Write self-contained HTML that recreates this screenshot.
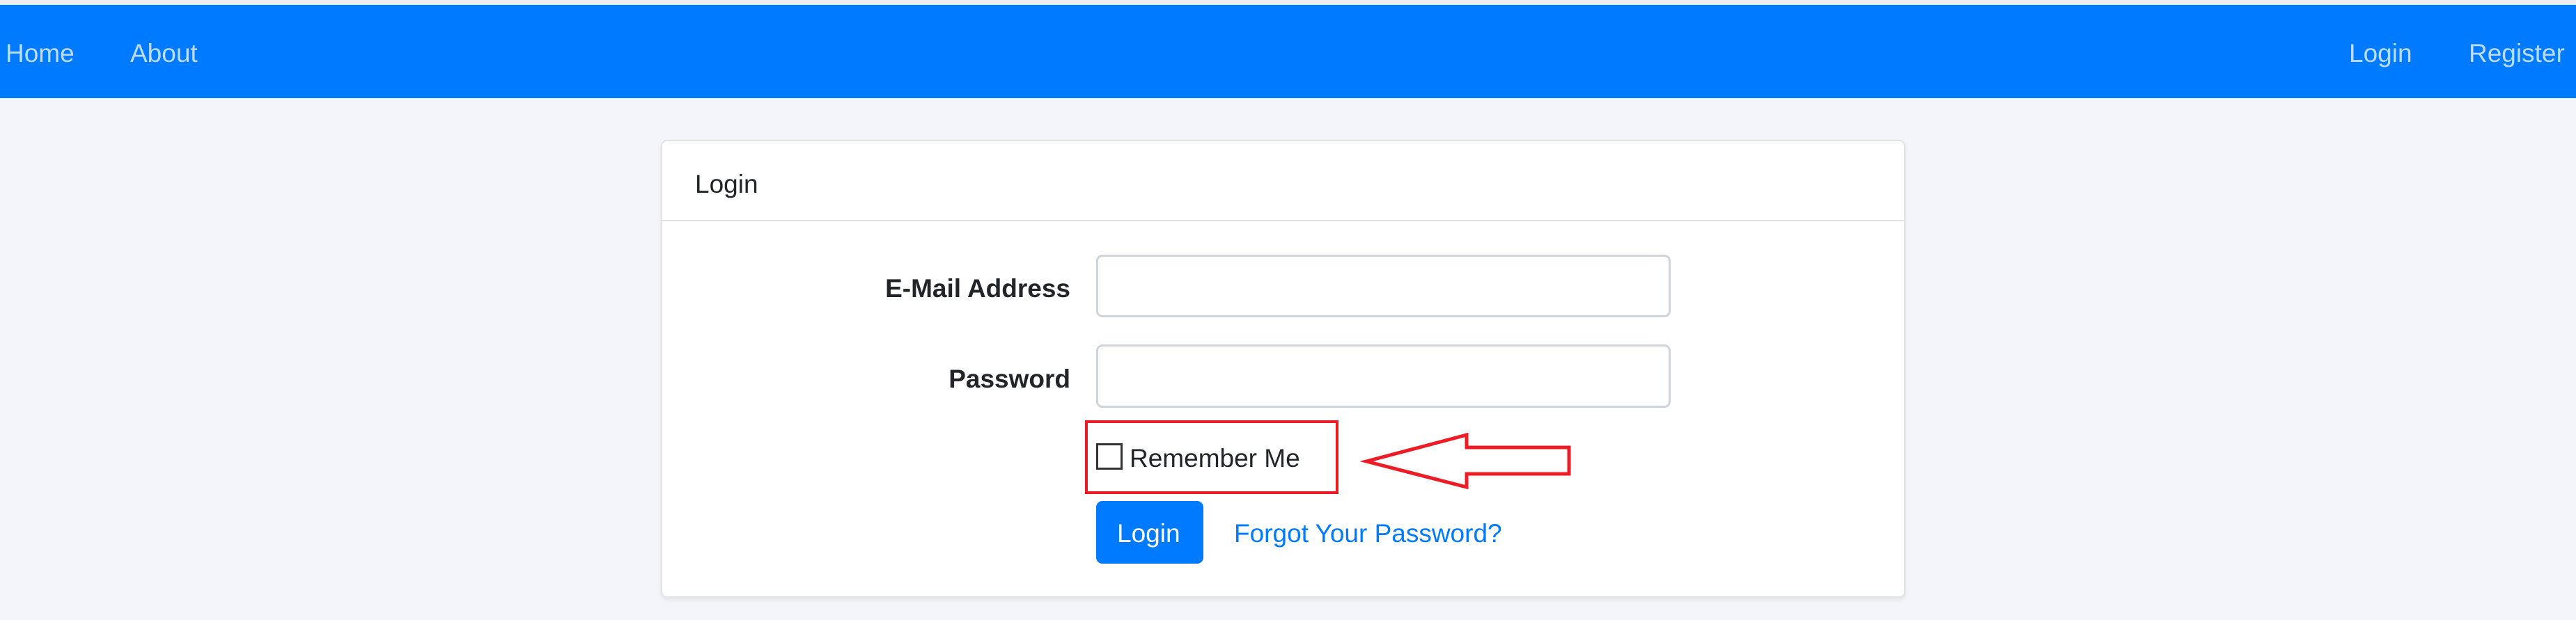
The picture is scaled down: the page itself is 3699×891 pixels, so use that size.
<!DOCTYPE html>
<html><head><meta charset="utf-8"><style>
*{margin:0;padding:0;box-sizing:border-box}
body{width:3699px;height:891px;background:#f4f5f9;position:relative;overflow:hidden;font-family:"Liberation Sans","DejaVu Sans",sans-serif;font-size:37px;color:#212529}
.t{position:absolute;white-space:nowrap;line-height:1}
#top{position:absolute;left:0;top:0;width:3699px;height:7px;background:#eeeeee}
#nav{position:absolute;left:0;top:7px;width:3699px;height:134px;background:#007bff}
.nl{color:#bcdcff}
#card{position:absolute;left:949px;top:201px;width:1787px;height:658px;background:#fff;border:2px solid #e2e3e6;border-radius:9px;box-shadow:0 3px 6px rgba(0,0,0,.08)}
#hl{position:absolute;left:949px;top:316px;width:1787px;height:2px;background:#dfdfe1}
.in{position:absolute;left:1574px;width:825px;background:#fff;border:3px solid #ced4da;border-radius:9px}
.lb{font-weight:bold;text-align:right}
#rb{position:absolute;left:1558px;top:604px;width:364px;height:106px;border:4px solid #ed1c24}
#cb{position:absolute;left:1574px;top:637px;width:38px;height:38px;border:3px solid #333;background:#fff}
#btn{position:absolute;left:1574px;top:720px;width:154px;height:90px;background:#007bff;border-radius:9px}
</style></head><body>
<div id="top"></div>
<div id="nav"></div>
<div class="t nl" style="left:8px;top:58px">Home</div>
<div class="t nl" style="left:187px;top:58px">About</div>
<div class="t nl" style="left:3373px;top:58px">Login</div>
<div class="t nl" style="left:3545px;top:58px">Register</div>
<div id="card"></div>
<div id="hl"></div>
<div class="t" style="left:998px;top:246px">Login</div>
<div class="t lb" style="left:1237px;width:300px;top:396px">E-Mail Address</div>
<div class="in" style="top:366px;height:90px"></div>
<div class="t lb" style="left:1237px;width:300px;top:526px">Password</div>
<div class="in" style="top:495px;height:91px"></div>
<div id="rb"></div>
<div id="cb"></div>
<div class="t" style="left:1622px;top:640px">Remember Me</div>
<svg style="position:absolute;left:0;top:0" width="3699" height="891"><polygon points="1962,663 2106,625 2106,643 2253,643 2253,681 2106,681 2106,700" fill="none" stroke="#ed1c24" stroke-width="5"/></svg>
<div id="btn"></div>
<div class="t" style="left:1604px;top:748px;color:#fff">Login</div>
<div class="t" style="left:1772px;top:748px;color:#007bff">Forgot Your Password?</div>
</body></html>
